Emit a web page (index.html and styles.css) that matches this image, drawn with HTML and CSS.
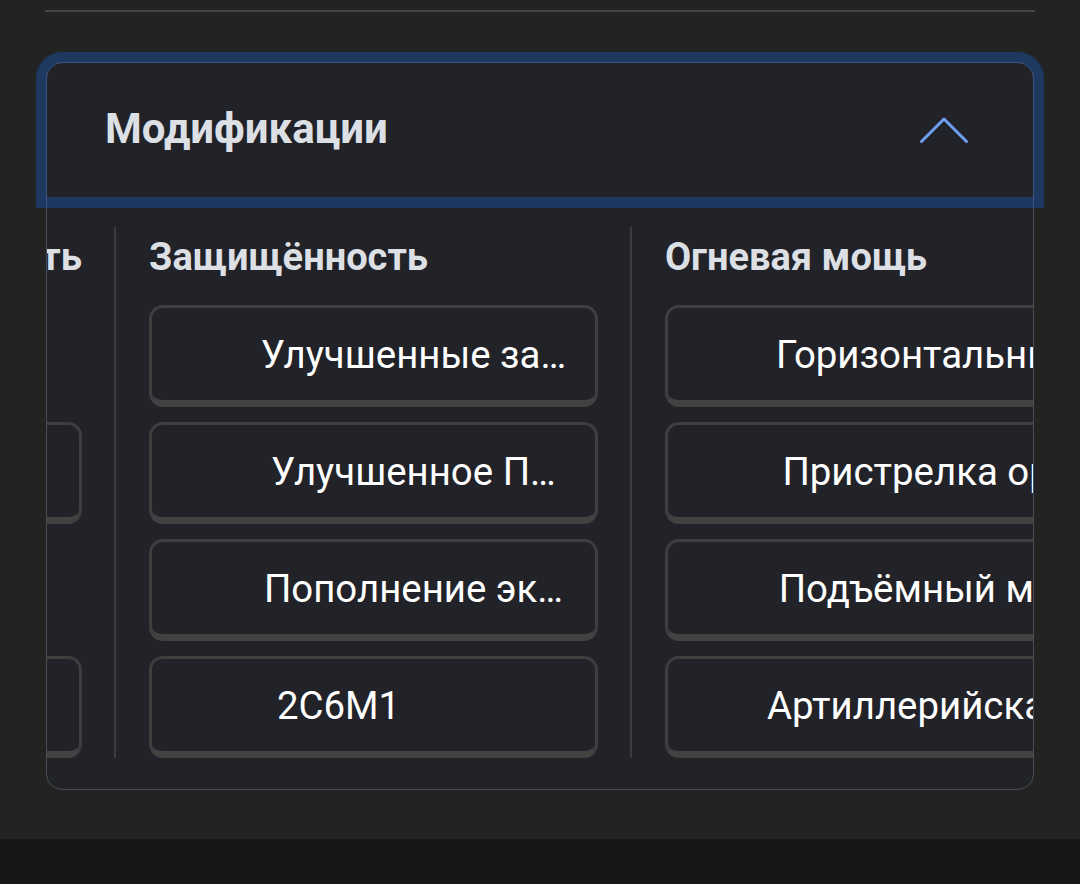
FILE: index.html
```html
<!DOCTYPE html>
<html lang="ru">
<head>
    <meta charset="UTF-8">
    <meta name="viewport" content="width=device-width, initial-scale=1.0">
    <link rel="stylesheet" href="styles.css">
    <title>Модификации</title>
</head>
<body>
    <div class="page">
        <hr class="rule">
        <section class="mods">
            <button class="mods-head" type="button">
                <span class="mods-title">Модификации</span>
                <svg class="chev" viewBox="0 0 50 28" width="50" height="28"><path d="M2.5 25.5 L25 3 L47.5 25.5"/></svg>
            </button>
            <div class="mods-scroll" id="modsScroll">
                <div class="mods-track">
                    <div class="mod-col mod-col--fit">
                        <h3 class="mod-col-title">Подвижность</h3>
                        <div class="mod-slot"></div>
                        <button class="mod-btn" type="button"><span>В-46</span></button>
                        <div class="mod-slot"></div>
                        <button class="mod-btn" type="button"><span>В-92</span></button>
                    </div>
                    <div class="mod-col" id="modsProtection">
                        <h3 class="mod-col-title">Защищённость</h3>
                        <button class="mod-btn" type="button"><span>Улучшенные за…</span></button>
                        <button class="mod-btn" type="button"><span>Улучшенное П…</span></button>
                        <button class="mod-btn" type="button"><span>Пополнение эк…</span></button>
                        <button class="mod-btn mod-btn--left" type="button"><span>2C6M1</span></button>
                    </div>
                    <div class="mod-col">
                        <h3 class="mod-col-title">Огневая мощь</h3>
                        <button class="mod-btn" type="button"><span>Горизонтальны…</span></button>
                        <button class="mod-btn" type="button"><span>Пристрелка ор…</span></button>
                        <button class="mod-btn" type="button"><span>Подъёмный ме…</span></button>
                        <button class="mod-btn" type="button"><span>Артиллерийская…</span></button>
                    </div>
                </div>
            </div>
        </section>
    </div>
    <div class="navbar"></div>
    <script src="script.js"></script>
</body>
</html>
```

FILE: styles.css
```css
*{box-sizing:border-box;}
body{margin:0;background:#171717;font-family:Roboto,'Noto Sans',sans-serif;}
.page{height:839px;background:#232323;padding:10px 45px 0;}
.navbar{height:45px;background:#171717;}
.rule{margin:0;border:0;border-top:2px solid #454545;}

.mods{margin:50px 1px 0;background:#212328;border:1px solid #494d55;border-radius:16px;padding-bottom:31px;}
.mods-head{display:flex;align-items:center;justify-content:space-between;width:100%;height:134px;padding:0 64px 0 58px;
    background:transparent;border:0;border-radius:15px 15px 0 0;box-shadow:0 0 0 11px rgba(24,100,210,.35);cursor:pointer;}
.mods-title{margin-bottom:4px;font-family:Roboto,sans-serif;font-size:42px;font-weight:700;color:#dcdfe4;}
.chev{display:block;fill:none;stroke:#6ea2f0;stroke-width:3;stroke-linecap:round;stroke-linejoin:round;}

.mods-scroll{position:relative;margin-top:30px;overflow-x:auto;overflow-y:hidden;padding:0 32px;scrollbar-width:none;}
.mods-scroll::-webkit-scrollbar{display:none;}
.mods-track{display:flex;width:max-content;}

.mod-col{display:flex;flex-direction:column;gap:15px;width:516px;padding:0 32px 0 33px;border-left:2px solid #3a3c40;flex:none;}
.mod-col--fit{width:auto;padding-left:0;border-left:0;}
.mod-col-title{margin:0 0 10px;padding-top:8px;font-size:38px;line-height:45px;font-weight:700;color:#dcdfe4;white-space:nowrap;}
.mod-slot{height:102px;}

.mod-btn{display:flex;align-items:center;height:102px;padding:0 17px 0 97px;background:#212328;
    border:3px solid #3e3e3e;border-bottom:7px solid #424242;border-radius:14px;cursor:pointer;}
.mod-col--fit .mod-btn{width:0;min-width:100%;overflow:hidden;}
.mod-col--fit .mod-btn span{text-align:left;}
.mod-btn span{flex:1;min-width:0;text-align:center;white-space:nowrap;overflow:hidden;
    font-family:Roboto,sans-serif;font-size:38.4px;color:#ffffff;}
.mod-btn--left span{text-align:left;padding-left:28px;}
```

FILE: script.js
```js
// держим прокрутку так, чтобы колонка "Защищённость" была у левого края
var scroller = document.getElementById("modsScroll");
var col = document.getElementById("modsProtection");
scroller.scrollLeft = col.offsetLeft - 67;
```
